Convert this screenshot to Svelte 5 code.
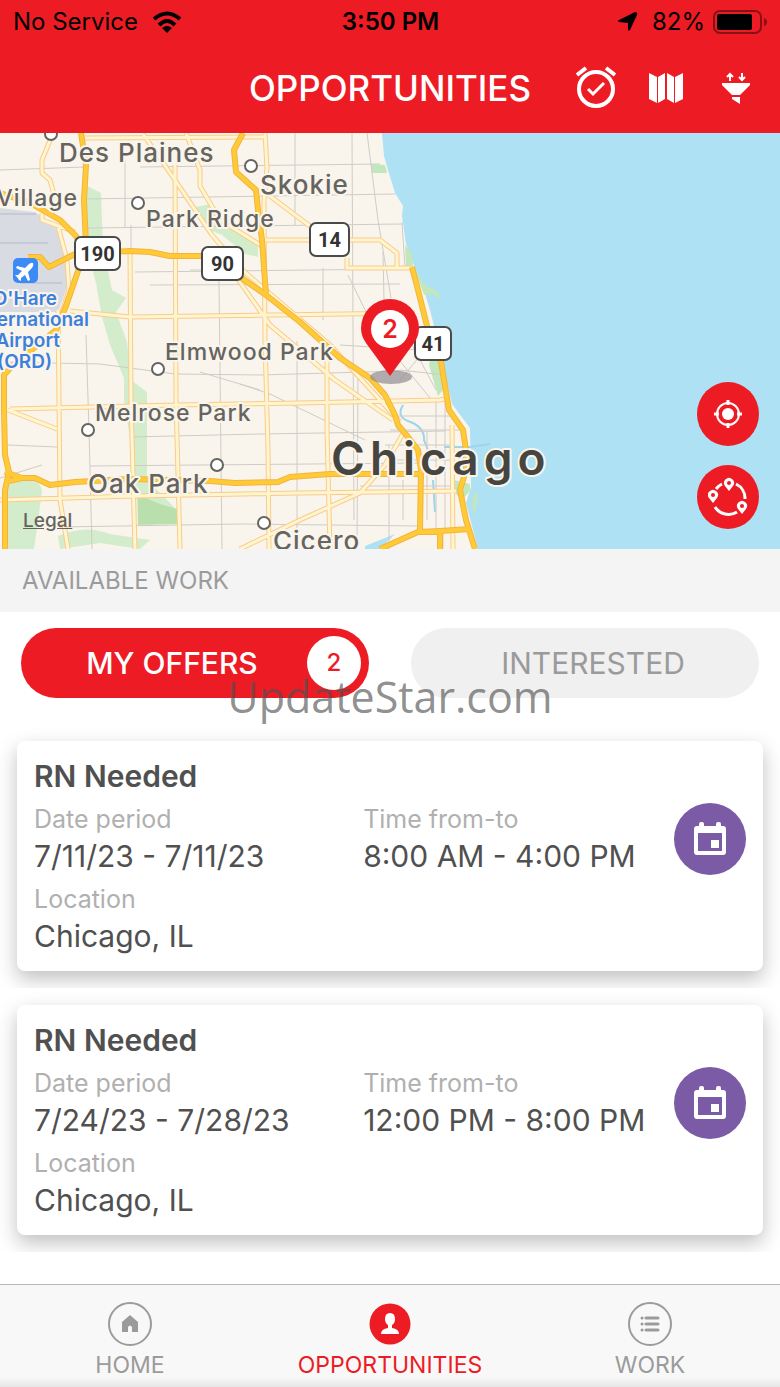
<script lang="ts">
	type Offer = {
		title: string;
		dates: string;
		hours: string;
		location: string;
	};

	const offers: Offer[] = [
		{
			title: 'RN Needed',
			dates: '7/11/23 - 7/11/23',
			hours: '8:00 AM - 4:00 PM',
			location: 'Chicago, IL'
		},
		{
			title: 'RN Needed',
			dates: '7/24/23 - 7/28/23',
			hours: '12:00 PM - 8:00 PM',
			location: 'Chicago, IL'
		}
	];

	const towns = [
		{ name: 'Des Plaines', x: 59, y: 162, size: 'large', dotX: 51, dotY: 134 },
		{ name: 'Skokie', x: 260, y: 194, size: 'large', dotX: 251, dotY: 166 },
		{ name: 'Park Ridge', x: 146, y: 227, size: 'small', dotX: 138, dotY: 203 },
		{ name: 'Elmwood Park', x: 165, y: 360, size: 'small', dotX: 158, dotY: 369 },
		{ name: 'Melrose Park', x: 95, y: 421, size: 'small', dotX: 88, dotY: 430 },
		{ name: 'Oak Park', x: 88, y: 493, size: 'large', dotX: 217, dotY: 465 },
		{ name: 'Cicero', x: 273, y: 550, size: 'large', dotX: 264, dotY: 523 }
	];

	const shields = [
		{ label: '190', x: 75, y: 237, width: 45 },
		{ label: '90', x: 202, y: 247, width: 41 },
		{ label: '14', x: 310, y: 223, width: 39 },
		{ label: '41', x: 415, y: 327, width: 36 }
	];

	const airport = ["O'Hare", 'International', 'Airport', '(ORD)'];
	const airportEnds = [57, 89, 60, 52];

	const streets =
		'M0 170L85 167M140 167L380 164M85 199L395 194M88 228L402 224M135 272L402 269M150 285L400 284M0 362L100 364L175 374L260 375L400 371M8 445L57 447M130 437L260 434L445 431M90 466L420 463M60 527L240 524L420 526M125 160V227M131 225V250M295 133V225M352 133L354 520M367 133L378 220L391 298M402 222L405 268M323 268V320M383 252L384 300M219 281L222 549M86 335L89 430L92 549M297 341V549M358 375L357 549M389 445V549M403 480V520M348 275L370 320M383 340L430 398M410 341L436 390M400 370L445 375M395 416H450M390 430H460M385 445H455M385 460H450M360 486H452M427 431V520M436 398V535M445 398V530M240 384L270 394L365 440M0 478L42 465M190 270L240 270M200 372L260 390M340 345L420 350M400 380L425 350';

	const roads =
		'M85 138L265 137M70 311L130 317L415 313M10 409L175 405L300 403L440 400L450 398M0 500L135 496L300 493L456 491M130 250L131 400L135 549M175 165L176 400L180 549M58 310L59 400L60 500L68 549M265 133L267 168L264 200L265 340L268 450L269 549M327 341V430L330 549M452 425L453 549M143 134L175 180L212 235L240 268L330 345L362 380L400 422M262 190L315 230M186 133L200 170V186L220 220L262 246M266 240H380L397 253V268M347 258V268H412M240 549L300 520L360 493L385 465L405 430M51 138L42 160V173L50 180L55 198M42 213V220L75 232M58 226L67 260L69 290L62 312M8 410L57 429M235 275L270 325L335 380L393 420M441 533V549';

	const highways =
		'M81 133L86 165L84 200L86 245L78 271L66 306L56 330L12 366L4 375V410L5 455L9 472L5 490V549M0 193L30 203L60 220L75 235L86 250M28 257H40L49 267L75 254L130 251L150 252L170 256H210L240 277L266 295L300 322L340 358L370 378L385 395L395 415L398 425L408 437L418 450L421 470L420 530M243 133L234 150L236 172L256 190L258 210L262 240L266 295M412 267L418 290L428 330L441 362L449 410L463 430L466 450V470L460 490L466 520L475 549M5 472L22 478H35L50 485L75 482L130 479L210 481L235 483L278 482L290 477L330 474H420M5 482L22 478M380 549L400 540L418 532L440 531L470 529M418 532H440V549';
</script>

<svelte:head>
	<title>Opportunities</title>
</svelte:head>

<div class="app">
	<header class="header">
		<div class="status">
			<div class="status__group">
				<span>No Service</span>
				<svg width="30" height="22" viewBox="0 0 30 22" aria-hidden="true">
					<g fill="none" stroke="#000" stroke-width="4">
						<path d="M2 8Q15 -3 28 8" />
						<path d="M7 14Q15 6 23 14" />
					</g>
					<path d="M10 17Q15 13 20 17L15 22Z" />
				</svg>
			</div>
			<strong class="status__time">3:50 PM</strong>
			<div class="status__group status__group--end">
				<svg width="20" height="20" viewBox="0 0 20 20" aria-hidden="true">
					<path d="M17 0Q20 0 19 3L12 18Q10 20 10 17V11L1 10Q-1 9 1 8Z" />
				</svg>
				<span class="status__charge">82%</span>
				<svg width="55" height="24" viewBox="0 0 55 24" aria-hidden="true">
					<rect x="1" y="1" width="47" height="22" rx="6" fill="none" stroke="#8b1015" stroke-width="2" />
					<rect x="4" y="4" width="35" height="16" rx="2" />
					<path d="M51 8Q54 9 54 12T51 16Z" fill="#8b1015" />
				</svg>
			</div>
		</div>
		<div class="nav">
			<h1 class="nav__title">OPPORTUNITIES</h1>
			<div class="nav__actions">
				<button class="nav__button" aria-label="Availability">
					<svg width="42" height="44" viewBox="0 0 42 44" fill="none" stroke="#fff">
						<circle cx="21" cy="23" r="17" stroke-width="4" />
						<path d="M2 9L11 2M31 2L40 9" stroke-width="4" />
						<path d="M13 23L18 28L29 17" stroke-width="3" />
					</svg>
				</button>
				<button class="nav__button" aria-label="Map">
					<svg width="34" height="30" viewBox="0 0 34 30" fill="#fff">
						<path d="M0 0L8 4V30L0 26ZM9 4L16 0V26L9 30ZM18 0L25 4V30L18 26ZM26 4L34 0V26L26 30Z" />
					</svg>
				</button>
				<button class="nav__button" aria-label="Sort and filter">
					<svg width="28" height="32" viewBox="0 0 28 32" fill="#fff">
						<path d="M0 11H28V13L18 23H10L0 13ZM10 25H18V32L10 27Z" />
						<path d="M8 9V2M5 5L8 2L11 5M20 1V8M17 5L20 8L23 5" fill="none" stroke="#fff" stroke-width="2" />
					</svg>
				</button>
			</div>
		</div>
	</header>

	<section class="map" aria-label="Map of Chicago">
		<svg class="map__canvas" viewBox="0 133 780 416">
			<rect y="133" width="780" height="416" fill="#f9f5ed" />
			<path d="M0 208L35 212L55 226L66 258L68 285L58 312L0 312Z" fill="#d8dbe2" />
			<path d="M0 214H36M0 243H48M20 283H62" stroke="#c6cad4" stroke-width="2" />
			<g fill="#d3edcc">
				<path d="M85 185L101 193L103 247L112 290L126 298L116 312L127 342L131 380L147 392V480L177 510V524H138L135 470L124 400V378L110 345L102 317L96 283L87 250Z" />
				<path d="M196 207L210 204L222 225L258 243V257L245 254L222 235L205 228Z" />
				<path d="M8 485Q40 472 42 492L34 549H8Z" />
				<path d="M58 536Q85 524 110 534L150 540L140 549L100 543L60 549Z" />
			</g>
			<path d="M138 495L160 504L177 509V524L138 525Z" fill="#b9e0ac" />
			<path d="M382 133L384 156L388 170L395 193L403 206L402 216L406 244L414 266L422 284L430 310L438 342L442 361L452 404L470 428L471 487L466 503L478 549H780V133Z" fill="#aee1f3" />
			<path d="M371 164L385 165L387 173H372ZM405 245L412 254L413 268L406 267ZM414 268L424 284L438 292L440 300L433 294L424 295ZM431 355L441 362L443 390L438 396L429 365ZM454 480L470 484V491L462 500L455 493ZM474 492L478 495L475 515L472 507Z" fill="#c2e7bd" />
			<path d="M403 405Q396 416 408 421Q425 427 424 440L430 455M433 480L435 512M444 447H470L490 444" fill="none" stroke="#9bd6ee" stroke-width="2" />
			<path d="M365 546L395 534L380 549H365Z" fill="#aee1f3" />
			<path class="line line--street" d={streets} />
			<path class="line line--casing" d={roads} />
			<path class="line line--road" d={roads} />
			<path class="line line--edge" d={highways} />
			<path class="line line--highway" d={highways} />

			{#each towns as town}
				<circle class="town-dot" cx={town.dotX} cy={town.dotY} r="6" />
				<text class="town town--{town.size}" x={town.x} y={town.y}>{town.name}</text>
			{/each}
			<text class="town town--small" x="78" y="206" text-anchor="end">Village</text>
			<text class="city" x="331" y="475">Chicago</text>

			<rect x="13" y="258" width="25" height="25" rx="5" fill="#3b8af5" />
			<path d="M33 263Q34 266 31 269L28 272L30 280L28 281L25 275L21 278V281L19 280L17 277L15 275H18L22 271L16 268L17 266L25 268L28 265Q31 262 33 263Z" fill="#fff" />
			{#each airport as line, i}
				<text class="airport" x={airportEnds[i]} y={305 + i * 21} text-anchor="end">{line}</text>
			{/each}

			{#each shields as shield}
				<rect class="shield" x={shield.x} y={shield.y} width={shield.width} height="33" rx="6" />
				<text class="shield-label" x={shield.x + shield.width / 2} y={shield.y + 24}>{shield.label}</text>
			{/each}

			<ellipse cx="391" cy="377" rx="21" ry="7" fill="#928c91" opacity="0.7" />
			<path d="M390 376L366 343Q361 336 361 328A29 29 0 0 1 419 328Q419 336 414 343Z" fill="#ed1c24" />
			<circle cx="390" cy="329" r="19" fill="#fff" />
			<text class="pin-label" x="390" y="338">2</text>
		</svg>
		<a class="map__legal" href="#legal">Legal</a>
		<div class="map__controls">
			<button class="map__button" aria-label="My location">
				<svg width="30" height="30" viewBox="0 0 30 30">
					<circle cx="15" cy="15" r="11" fill="none" stroke="#fff" stroke-width="2" />
					<circle cx="15" cy="15" r="6" fill="#fff" />
					<path d="M15 1V6M15 24V29M1 15H6M24 15H29" stroke="#fff" stroke-width="3" />
				</svg>
			</button>
			<button class="map__button" aria-label="Search radius">
				<svg width="40" height="40" viewBox="0 0 40 40">
					<path d="M8 12A16 16 0 0 1 14 7M28 7A16 16 0 0 1 37 22M29 35A16 16 0 0 1 7 30" fill="none" stroke="#fff" stroke-width="3" />
					<g fill="#fff">
						<path d="M21 14L17 9A5 5 0 1 1 25 9ZM5 26L1 21A5 5 0 1 1 9 21ZM34 37L30 32A5 5 0 1 1 38 32Z" />
					</g>
					<g fill="#ed1c24">
						<circle cx="21" cy="6" r="2" />
						<circle cx="5" cy="18" r="2" />
						<circle cx="34" cy="29" r="2" />
					</g>
				</svg>
			</button>
		</div>
	</section>

	<h2 class="section-title">AVAILABLE WORK</h2>

	<main>
		<div class="filters">
			<button class="filter filter--active" aria-pressed="true">
				<span class="filter__text">MY OFFERS</span>
				<span class="filter__count">2</span>
			</button>
			<button class="filter" aria-pressed="false">
				<span class="filter__text">INTERESTED</span>
			</button>
			<span class="watermark">UpdateStar.com</span>
		</div>

		<ul class="offers">
			{#each offers as offer}
				<li class="offers__item">
					<article class="card">
						<div class="card__body">
							<h3 class="card__title">{offer.title}</h3>
							<dl class="card__fields">
								<div>
									<dt>Date period</dt>
									<dd>{offer.dates}</dd>
								</div>
								<div>
									<dt>Time from-to</dt>
									<dd>{offer.hours}</dd>
								</div>
								<div>
									<dt>Location</dt>
									<dd>{offer.location}</dd>
								</div>
							</dl>
						</div>
						<button class="card__button" aria-label="Add to calendar">
							<svg width="32" height="34" viewBox="0 0 32 34">
								<path d="M3 4H5V2Q5 0 7 0H8Q10 0 10 2V4H22V2Q22 0 24 0H25Q27 0 27 2V4H29Q32 4 32 7V30Q32 33 29 33H3Q0 33 0 30V7Q0 4 3 4ZM4 11V29H28V11Z" fill="#fff" fill-rule="evenodd" />
								<path d="M17 18H25V26H17Z" fill="#fff" />
							</svg>
						</button>
					</article>
				</li>
			{/each}
		</ul>
	</main>

	<nav class="tabbar">
		<a class="tabbar__item" href="#home">
			<svg width="44" height="44" viewBox="0 0 44 44">
				<circle cx="22" cy="22" r="21" fill="none" stroke="currentColor" stroke-width="2" />
				<path d="M22 13L30 20V30H24V25Q22 22 20 25V30H14V20Z" fill="currentColor" />
			</svg>
			<span>HOME</span>
		</a>
		<a class="tabbar__item tabbar__item--active" href="#opportunities" aria-current="page">
			<svg width="44" height="44" viewBox="0 0 44 44">
				<circle cx="22" cy="22" r="20.5" fill="currentColor" />
				<path d="M22 11Q27 11 27 17Q27 21 24 23V26Q31 27 31 32H13Q13 27 20 26V23Q17 21 17 17Q17 11 22 11Z" fill="#fff" />
			</svg>
			<span>OPPORTUNITIES</span>
		</a>
		<a class="tabbar__item" href="#work">
			<svg width="44" height="44" viewBox="0 0 44 44" fill="none" stroke="currentColor">
				<circle cx="22" cy="22" r="21" stroke-width="2" />
				<path d="M18 16H30M18 22H30M18 28H30M14 16H14.1M14 22H14.1M14 28H14.1" stroke-width="3" stroke-linecap="round" />
			</svg>
			<span>WORK</span>
		</a>
	</nav>
</div>

<style>
	:global(body) {
		margin: 0;
		background: #fff;
	}

	.app {
		--color-primary: #ed1c24;
		--color-text: #505050;
		--color-muted: #9b9b9b;
		font-family: Inter, 'Liberation Sans', sans-serif;
		color: var(--color-text);
	}

	button {
		border: 0;
		padding: 0;
		background: none;
		font: inherit;
		color: inherit;
	}

	svg {
		display: block;
		flex: none;
	}

	h1,
	h2,
	h3,
	dl,
	dd,
	ul {
		margin: 0;
		padding: 0;
	}

	.header {
		background: var(--color-primary);
	}

	.status,
	.nav {
		display: grid;
		grid-template-columns: 1fr auto 1fr;
		align-items: center;
	}

	.status {
		padding: 0 12px 0 13px;
		font-size: 24px;
		line-height: 43px;
		color: #000;
	}

	.status__group {
		display: flex;
		align-items: center;
		gap: 14px;
	}

	.status__group--end {
		justify-content: flex-end;
	}

	.status__charge {
		margin-right: -6px;
	}

	.status__time {
		font-weight: 600;
	}

	.nav {
		height: 90px;
		padding: 0 9px;
		color: #fff;
	}

	.nav__title {
		grid-column: 2;
		font-size: 35px;
		font-weight: 500;
		line-height: 44px;
	}

	.nav__actions {
		display: flex;
		justify-content: flex-end;
	}

	.nav__button {
		display: grid;
		place-items: center;
		width: 70px;
		height: 70px;
	}

	.map {
		position: relative;
		overflow: hidden;
	}

	.map__canvas {
		width: 100%;
		height: auto;
	}

	.map__legal {
		position: absolute;
		left: 23px;
		bottom: 16px;
		font-size: 19px;
		font-weight: 500;
		line-height: 24px;
		color: #66645f;
	}

	.map__controls {
		position: absolute;
		right: 21px;
		bottom: 20px;
		display: grid;
		gap: 19px;
	}

	.map__button {
		display: grid;
		place-items: center;
		width: 62px;
		height: 64px;
		border-radius: 50%;
		background: var(--color-primary);
	}

	.line {
		fill: none;
		stroke-linejoin: round;
	}

	.line--street {
		stroke: #cfccc6;
		stroke-width: 1px;
	}

	.line--casing {
		stroke: #f9cb8c;
		stroke-width: 5px;
	}

	.line--road {
		stroke: #fff6cf;
		stroke-width: 3px;
	}

	.line--edge {
		stroke: #f4b340;
		stroke-width: 6px;
	}

	.line--highway {
		stroke: #fecb37;
		stroke-width: 4px;
	}

	.town,
	.city,
	.airport {
		paint-order: stroke;
		stroke: #f9f5ed;
		stroke-width: 4px;
		stroke-linejoin: round;
	}

	.town {
		fill: #66645f;
		font-weight: 500;
		letter-spacing: 1px;
	}

	.town--large {
		font-size: 26px;
	}

	.town--small {
		font-size: 23px;
	}

	.town-dot {
		fill: #fff;
		stroke: #66645f;
		stroke-width: 2px;
	}

	.city {
		fill: #474540;
		font-size: 46px;
		font-weight: 600;
		letter-spacing: 5px;
	}

	.airport {
		fill: #3d80dc;
		font-size: 19px;
		font-weight: 600;
	}

	.shield {
		fill: #fff;
		stroke: #4a4a4a;
		stroke-width: 2px;
	}

	.shield-label {
		fill: #333;
		font-family: Roboto, sans-serif;
		font-size: 20px;
		font-weight: 700;
		text-anchor: middle;
	}

	.pin-label {
		fill: var(--color-primary);
		font-size: 25px;
		font-weight: 600;
		text-anchor: middle;
	}

	.section-title {
		padding: 0 22px;
		background: #f4f4f4;
		font-size: 24px;
		font-weight: 400;
		line-height: 63px;
		color: var(--color-muted);
	}

	.filters {
		position: relative;
		display: grid;
		grid-template-columns: 1fr 1fr;
		gap: 42px;
		padding: 16px 21px 26px;
	}

	.filter {
		display: flex;
		align-items: center;
		height: 70px;
		padding: 0 8px;
		border-radius: 35px;
		background: #f0f0f0;
		font-size: 30px;
		color: var(--color-muted);
	}

	.filter--active {
		background: var(--color-primary);
		font-weight: 500;
		color: #fff;
	}

	.filter__text {
		flex: 1;
		padding-left: 16px;
	}

	.filter--active .filter__text {
		padding-left: 8px;
	}

	.filter__count {
		width: 54px;
		border-radius: 50%;
		background: #fff;
		font-size: 24px;
		line-height: 54px;
		color: var(--color-primary);
	}

	.watermark {
		position: absolute;
		top: 55px;
		left: 0;
		right: 0;
		font-family: 'Open Sans', sans-serif;
		font-size: 43px;
		line-height: 60px;
		text-align: center;
		color: rgba(80, 80, 80, 0.65);
		pointer-events: none;
	}

	.offers {
		list-style: none;
	}

	/* each row clips the shadow of its own card */
	.offers__item {
		overflow: hidden;
		padding: 17px;
	}

	.card {
		display: flex;
		align-items: center;
		padding: 13px 17px;
		border-radius: 8px;
		background: #fff;
		box-shadow: 0 8px 20px rgba(0, 0, 0, 0.25);
	}

	.card__body {
		flex: 1;
	}

	.card__title {
		font-size: 30px;
		font-weight: 600;
		line-height: 44px;
	}

	.card__fields {
		display: grid;
		grid-template-columns: 18fr 17fr;
		white-space: nowrap;
	}

	dt {
		font-size: 25px;
		line-height: 42px;
		color: #b0b0b0;
	}

	dd {
		padding-bottom: 6px;
		font-size: 30px;
		line-height: 32px;
	}

	.card__button {
		display: grid;
		place-items: center;
		width: 72px;
		height: 72px;
		margin-bottom: 34px;
		border-radius: 50%;
		background: #7b5ba6;
	}

	.tabbar {
		display: grid;
		grid-template-columns: repeat(3, 1fr);
		margin-top: 32px;
		padding: 17px 0 7px;
		border-top: 1px solid #b8b8b8;
		background: linear-gradient(to top, #e6e6e6, #f8f8f8 10px);
	}

	.tabbar__item {
		display: flex;
		flex-direction: column;
		align-items: center;
		gap: 4px;
		font-size: 23px;
		line-height: 30px;
		text-decoration: none;
		color: var(--color-muted);
	}

	.tabbar__item--active {
		color: var(--color-primary);
	}
</style>
